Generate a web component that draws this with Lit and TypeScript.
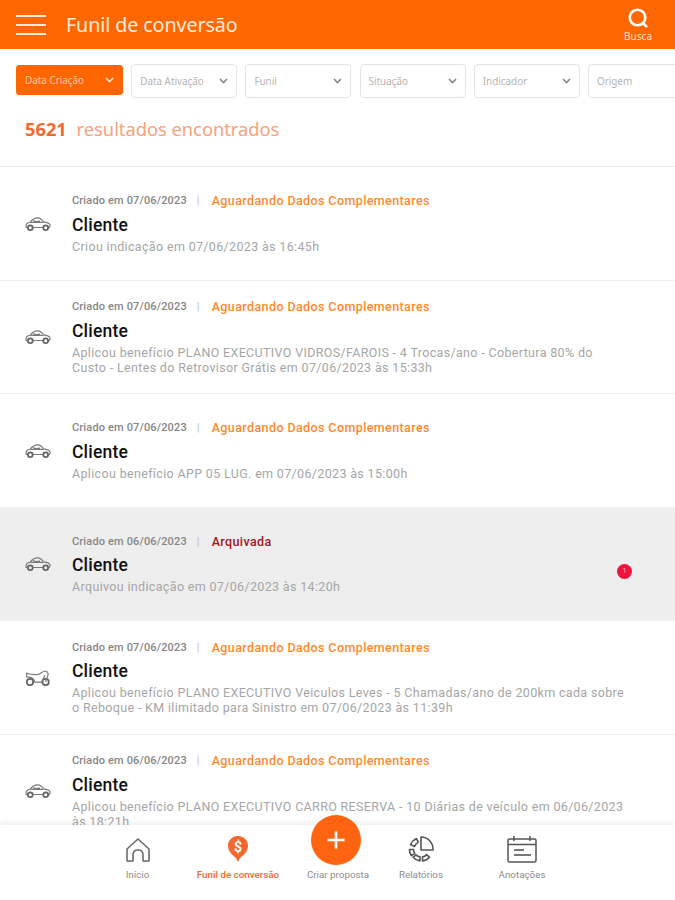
import { LitElement, html, css, svg } from "lit";
import { customElement } from "lit/decorators.js";

type Row = { date: string; status: string; archived?: boolean; desc: string; moto?: boolean; badge?: boolean };

const rows: Row[] = [
  { date: "07/06/2023", status: "Aguardando Dados Complementares", desc: "Criou indicação em 07/06/2023 às 16:45h" },
  { date: "07/06/2023", status: "Aguardando Dados Complementares", desc: "Aplicou benefício PLANO EXECUTIVO VIDROS/FAROIS - 4 Trocas/ano - Cobertura 80% do Custo - Lentes do Retrovisor Grátis em 07/06/2023 às 15:33h" },
  { date: "07/06/2023", status: "Aguardando Dados Complementares", desc: "Aplicou benefício APP 05 LUG. em 07/06/2023 às 15:00h" },
  { date: "06/06/2023", status: "Arquivada", archived: true, badge: true, desc: "Arquivou indicação em 07/06/2023 às 14:20h" },
  { date: "07/06/2023", status: "Aguardando Dados Complementares", moto: true, desc: "Aplicou benefício PLANO EXECUTIVO Veiculos Leves - 5 Chamadas/ano de 200km cada sobre o Reboque - KM ilimitado para Sinistro em 07/06/2023 às 11:39h" },
  { date: "06/06/2023", status: "Aguardando Dados Complementares", desc: "Aplicou benefício PLANO EXECUTIVO CARRO RESERVA - 10 Diárias de veículo em 06/06/2023 às 18:21h" },
];

const filters = ["Data Ativação", "Funil", "Situação", "Indicador", "Origem"];

const chevron = svg`<svg class="chev" width="9" height="6" viewBox="0 0 9 6" fill="none"><path d="M1 1l3.500 3.500L8 1" stroke="currentColor" stroke-width="1.600"/></svg>`;

const car = svg`<svg width="26" height="16" viewBox="0 0 26 16" fill="none" stroke="#7a7a7a" stroke-width="1.200">
  <path d="M2.500 11.500H1.200C.8 9.500 1 7.800 2.600 7l2.600-.8C7 3.600 9.500 1.800 12.500 1.800c2.700 0 4.500 1.600 6 4 3 .4 6 1 6.500 3 .2 1 0 2-.7 2.700h-1.500M8 11.500h10"/>
  <path d="M5.500 6.300h13M8 4.600c1.500 1 4 1.200 7 .6"/>
  <circle cx="5.300" cy="11.700" r="2.400" stroke-width="1.800" stroke="#666"/><circle cx="20.700" cy="11.700" r="2.400" stroke-width="1.800" stroke="#666"/>
</svg>`;

const moto = svg`<svg width="26" height="18" viewBox="0 0 26 18" fill="none" stroke="#7a7a7a" stroke-width="1.200">
  <circle cx="5" cy="13" r="3.200" stroke-width="1.800" stroke="#666"/><circle cx="20.600" cy="13" r="3.200" stroke-width="1.800" stroke="#666"/>
  <path d="M1.200 4c4 1.500 8 1.800 12 1.400 2-.4 4-3 6.800-3.400 2 0 3 1.500 3.200 3.400L20.600 13"/>
  <path d="M1.600 4v3.800c2.800.2 5.400.6 7 2.400l1.200 3h6.800l3.400-7"/>
</svg>`;

@customElement("app-root")
export class AppRoot extends LitElement {
  static styles = css`
    :host {
      display: block;
      width: 675px;
      height: 900px;
      overflow: hidden;
      background: #fff;
      font-family: Roboto, "Liberation Sans", sans-serif;
    }
    .page { position: relative; display: flex; flex-direction: column; height: 900px; }
    header {
      flex: none;
      height: 49px;
      background: #ff6700;
      color: #fff;
      display: flex;
      align-items: center;
      padding: 0 23px 0 16px;
    }
    .burger { display: flex; flex-direction: column; gap: 7px; width: 30px; margin-right: 20px; }
    .burger i { display: block; height: 2px; background: #ffe9da; }
    h1 { flex: 1; margin: 0; font: 400 19.7px "Noto Sans", sans-serif; color: #ffeadb; letter-spacing: -0.1px; }
    .search { display: flex; flex-direction: column; align-items: center; font: 400 10px/12px "Noto Sans", sans-serif; color: #ffe3cf; }
    .filters { flex: none; display: flex; align-items: center; gap: 8.2px; height: 34px; padding: 15px 0 0 16px; overflow: hidden; }
    .filter {
      flex: none;
      box-sizing: border-box;
      width: 106px;
      height: 34px;
      border: 1.5px solid #e4e4e4;
      border-radius: 4px;
      display: flex;
      align-items: center;
      justify-content: space-between;
      padding: 0 8px;
      font: 400 9.9px "Noto Sans", sans-serif;
      color: #b4b4b4;
    }
    .filter.on { width: 107px; height: 30px; background: #ff6500; border-color: #ff6500; color: #ffc7a3; border-radius: 3px; margin-top: -2px; }
    .filter .chev { color: #888; }
    .filter.on .chev { color: #ffe3cf; }
    .count { flex: none; height: 69px; box-sizing: border-box; padding: 18px 0 0 25px; font: 400 18.3px "Noto Sans", sans-serif; color: #f8a27c; border-bottom: 1.5px solid #e8e8e8; }
    .count b { color: #f26a32; font-weight: 700; margin-right: 5px; }
    .list { flex: 1; min-height: 0; overflow: hidden; }
    .row {
      box-sizing: border-box;
      height: 113.5px;
      display: flex;
      align-items: center;
      border-bottom: 1.5px solid #eeeeee;
      padding: 1px 0 0 25px;
    }
    .row.arch { background: #eeeeee; }
    .ico { flex: none; width: 47px; display: flex; }
    .body { flex: 1; min-width: 0; padding-right: 47px; }
    .meta { display: flex; align-items: center; height: 14px; font-size: 11px; font-weight: 500; color: #868686; letter-spacing: 0.15px; }
    .sep { margin: 0 12px 0 10px; color: #bbb; font-weight: 400; }
    .status { font-size: 12.5px; font-weight: 500; color: #ff8a2a; letter-spacing: 0.4px; }
    .status.a { color: #a5141c; }
    .title { font-size: 17.5px; font-weight: 500; color: #111; line-height: 22px; margin-top: 6px; letter-spacing: 0.2px; }
    .desc { font-size: 12.5px; color: #a6a6a6; line-height: 15px; margin-top: 3px; letter-spacing: 0.34px; }
    .badge {
      flex: none;
      width: 15px;
      height: 15px;
      border-radius: 50%;
      background: #f0143c;
      color: #ffb6c4;
      font-size: 7px;
      display: flex;
      align-items: center;
      justify-content: center;
      margin: 0 43px 0 -30px;
      position: relative;
      top: 7px;
    }
    nav {
      flex: none;
      position: relative;
      height: 75px;
      background: #fff;
      box-shadow: 0 -3px 5px rgba(0, 0, 0, 0.06);
      display: grid;
      grid-template-columns: 101px 100px 100px 66px 136px;
      padding-left: 87px;
    }
    .tab { display: flex; flex-direction: column; align-items: center; justify-content: flex-end; padding-bottom: 20px; font-size: 9.8px; color: #8d8d8d; gap: 6px; }
    .tab.on { color: #f4682e; font-weight: 500; }
    .tab svg { display: block; }
    .fab {
      position: absolute;
      left: 311px;
      top: -10px;
      width: 50px;
      height: 50px;
      border-radius: 50%;
      background: #ff6410;
      display: flex;
      align-items: center;
      justify-content: center;
    }
  `;

  render() {
    return html`<div class="page">
      <header>
        <div class="burger"><i></i><i></i><i></i></div>
        <h1>Funil de conversão</h1>
        <div class="search">
          <svg width="22" height="22" viewBox="0 0 22 22" fill="none" stroke="#fff" stroke-width="2.600"><circle cx="10.500" cy="9.500" r="7.800"/><path d="M15.800 15l4.200 4.200"/></svg>
          Busca
        </div>
      </header>
      <div class="filters">
        <div class="filter on">Data Criação ${chevron}</div>
        ${filters.map((f) => html`<div class="filter">${f} ${chevron}</div>`)}
      </div>
      <div class="count"><b>5621</b> resultados encontrados</div>
      <div class="list">
        ${rows.map(
          (r) => html`<div class="row ${r.archived ? "arch" : ""}">
            <div class="ico">${r.moto ? moto : car}</div>
            <div class="body">
              <div class="meta">
                Criado em ${r.date}<span class="sep">|</span>
                <span class="status ${r.archived ? "a" : ""}">${r.status}</span>
              </div>
              <div class="title">Cliente</div>
              <div class="desc">${r.desc}</div>
            </div>
            ${r.badge ? html`<div class="badge">1</div>` : ""}
          </div>`
        )}
      </div>
      <nav>
        <div class="tab">
          <svg width="26" height="26" viewBox="0 0 26 26" fill="none" stroke="#6a6a6a" stroke-width="1.600"><path d="M2 12L13 2l11 10v12H18v-6c0-3-2-5-5-5s-5 2-5 5v6H2z" stroke-linejoin="round"/></svg>
          Início
        </div>
        <div class="tab on">
          <svg width="22" height="28" viewBox="0 0 22 28"><path d="M11 1C5 1 1 5.400 1 11c0 5 4 9 8 12l2 4 2-4c4-3 8-7 8-12 0-5.600-4-10-10-10z" fill="#f4682e"/><text x="11" y="17" text-anchor="middle" font-size="14" font-weight="700" font-family="Roboto" fill="#fff">$</text></svg>
          Funil de conversão
        </div>
        <div class="tab">Criar proposta</div>
        <div class="tab">
          <svg width="28" height="28" viewBox="0 0 28 28" fill="none" stroke="#555" stroke-width="1.600" stroke-linejoin="round"><path d="M14 2a12 12 0 0 1 12 12v1H14z"/><path d="M9.500 3.600a12 12 0 0 0-6 6l4 1.800a8 8 0 0 1 3.800-4z"/><path d="M2.400 14.500c0 2.300.8 4.400 2 6.200l3.400-2.400c-.8-1-1.300-2.400-1.300-3.800z"/><path d="M6 22.300c1.800 2 4.200 3.300 7 3.600v-4c-1.700-.3-3-1-4-2z"/><path d="M15.500 25.900c2.800-.3 5.300-1.700 7-3.700l-3-2.500c-1 1.200-2.400 2-4 2.200z"/></svg>
          Relatórios
        </div>
        <div class="tab">
          <svg width="30" height="28" viewBox="0 0 30 28" fill="none" stroke="#555" stroke-width="1.500"><rect x="1" y="4" width="28" height="23" rx="1.500"/><path d="M1 9.500h28M7 1v5M23 1v5"/><path d="M7 15h10M7 20h17" stroke-width="1.800" stroke="#777"/></svg>
          Anotações
        </div>
        <div class="fab"><svg width="20" height="20" viewBox="0 0 20 20" stroke="#fff" stroke-width="2.600"><path d="M10 1.500v17M1.500 10h17"/></svg></div>
      </nav>
    </div>`;
  }
}
